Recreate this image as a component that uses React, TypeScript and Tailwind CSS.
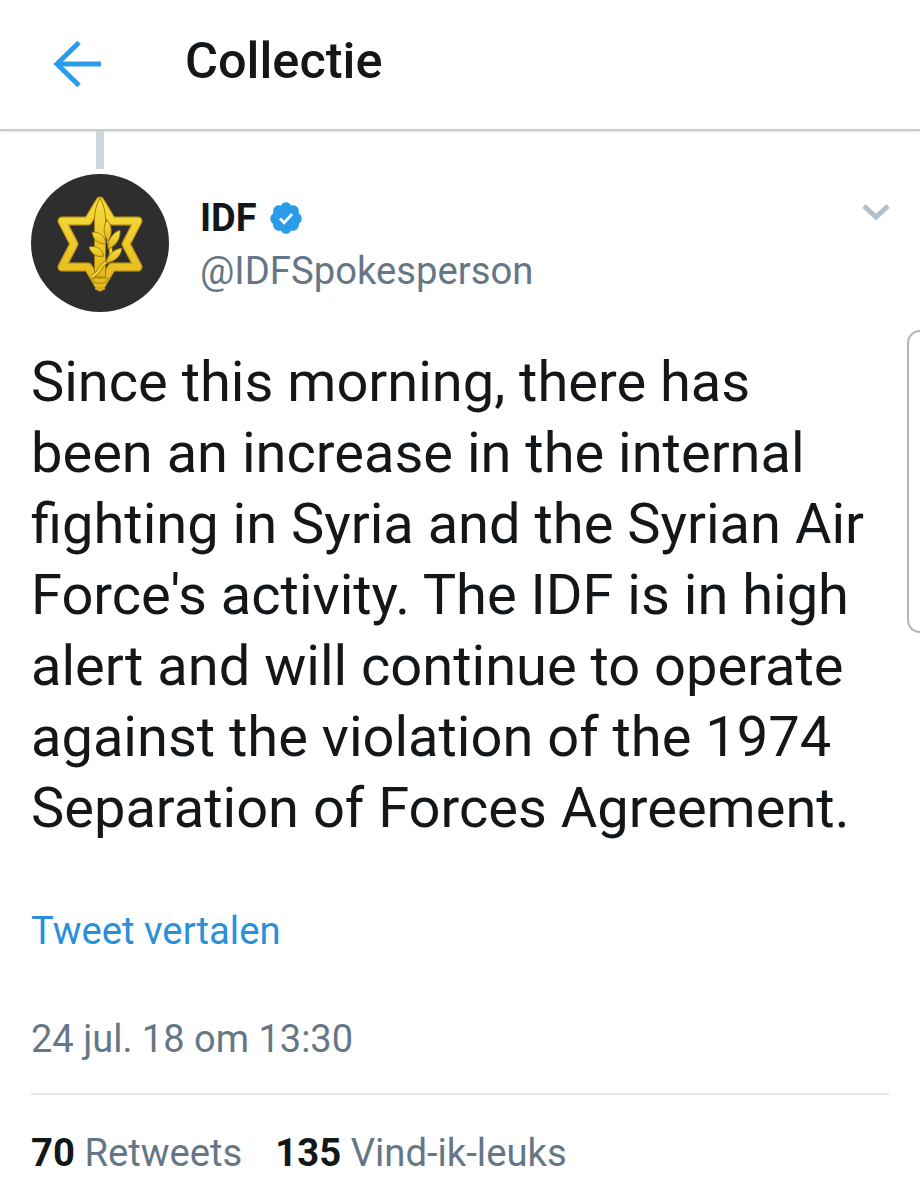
const tweetLines = [
  'Since this morning, there has',
  'been an increase in the internal',
  'fighting in Syria and the Syrian Air',
  "Force's activity. The IDF is in high",
  'alert and will continue to operate',
  'against the violation of the 1974',
  'Separation of Forces Agreement.',
]

function BackArrow() {
  return (
    <svg width="48" height="48" viewBox="0 0 48 48" fill="none" stroke="#2b9ce8" strokeWidth="5">
      <path d="M48 24H4" />
      <path d="M26 2.500L4 24L26 45.500" />
    </svg>
  )
}

function VerifiedBadge() {
  return (
    <svg width="36" height="36" viewBox="0 0 24 24">
      <path
        fill="#2b9ce8"
        d="M22.500 12.500c0-1.580-.875-2.950-2.148-3.600.154-.435.238-.905.238-1.400 0-2.210-1.710-3.998-3.818-3.998-.47 0-.92.084-1.336.25C14.818 2.415 13.510 1.500 12 1.500s-2.816.917-3.437 2.250c-.415-.165-.866-.25-1.336-.25-2.110 0-3.818 1.790-3.818 4 0 .494.083.964.237 1.400-1.272.65-2.147 2.018-2.147 3.600 0 1.495.782 2.798 1.942 3.486-.02.17-.032.34-.032.514 0 2.210 1.708 4 3.818 4 .47 0 .92-.086 1.335-.25.620 1.334 1.926 2.250 3.437 2.250 1.512 0 2.818-.916 3.437-2.250.415.163.865.248 1.336.248 2.110 0 3.818-1.790 3.818-4 0-.174-.012-.344-.033-.513 1.158-.687 1.943-1.990 1.943-3.484z"
      />
      <path d="M8 12.400l2.800 2.800 5.200-5.800" fill="none" stroke="#fff" strokeWidth="1.900" />
    </svg>
  )
}

function IdfLogo() {
  return (
    <svg width="138" height="138" viewBox="0 0 138 138">
      <defs>
        <linearGradient id="gold" x1="0" y1="0" x2="0" y2="1">
          <stop offset="0" stopColor="#f8dd3e" />
          <stop offset="1" stopColor="#e3b618" />
        </linearGradient>
      </defs>
      <circle cx="69" cy="69" r="69" fill="#2e2e2f" />
      {/* star */}
      <path
        d="M69 27L81 47H107L95 70L107 93H81L69 113L57 93H31L43 70L31 47H57Z"
        fill="none"
        stroke="#c79c10"
        strokeWidth="9"
        strokeLinejoin="round"
      />
      <path
        d="M69 27L81 47H107L95 70L107 93H81L69 113L57 93H31L43 70L31 47H57Z"
        fill="none"
        stroke="url(#gold)"
        strokeWidth="6.500"
        strokeLinejoin="round"
      />
      {/* sword */}
      <path d="M69 24C73 31 74.500 38 74.500 46V103H63.500V46C63.500 38 65 31 69 24Z" fill="url(#gold)" stroke="#a07c0a" strokeWidth="1" />
      <path d="M61 104H77L74 109H64Z" fill="#e5bb1e" stroke="#a07c0a" strokeWidth="0.800" />
      <rect x="63" y="110" width="12" height="2.500" rx="1" fill="#e5bb1e" />
      <rect x="64" y="113.500" width="10" height="2.500" rx="1" fill="#d4a91a" />
      {/* olive branch */}
      <path d="M60 103C72 98 66 92 76 88C82 82 80 74 77 66" fill="none" stroke="#a07c0a" strokeWidth="4" />
      <path d="M60 103C72 98 66 92 76 88C82 82 80 74 77 66" fill="none" stroke="#f4d53a" strokeWidth="2.400" />
      <g fill="url(#gold)" stroke="#8f6e08" strokeWidth="0.800">
        <path d="M76 46C81 51 82 60 77 67C72 61 72 52 76 46Z" />
        <path d="M89 56C90 65 85 72 77 75C76 67 81 59 89 56Z" />
        <path d="M61 58C69 58 74 62 75 70C67 70 62 66 61 58Z" />
        <path d="M91 74C90 82 84 88 75 89C76 81 83 75 91 74Z" />
        <path d="M58 73C65 71 71 75 73 82C66 84 60 80 58 73Z" />
      </g>
    </svg>
  )
}

export default function App() {
  return (
    <div className="relative h-[1200px] w-[920px] overflow-hidden bg-white font-['Roboto',sans-serif] text-[#14171a]">
      <header className="flex h-[131px] items-start border-b-2 border-[#c9cccf] bg-white pt-[40px] pl-[53px] shadow-[0_1px_3px_rgba(0,0,0,0.12)]">
        <BackArrow />
        <h1 className="ml-[84px] -mt-[4px] text-[50.500px] leading-[50px] font-medium">Collectie</h1>
      </header>

      <main className="flex flex-col px-[31px]">
        <div className="ml-[65px] h-[38px] w-2 bg-[#ccd6dd]" />

        <div className="mt-[5px] flex items-start">
          <IdfLogo />
          <div className="ml-[31px] flex flex-1 flex-col pt-[24px]">
            <div className="flex items-center gap-[11px]">
              <span className="text-[38px] leading-[40px] font-bold">IDF</span>
              <VerifiedBadge />
            </div>
            <span className="mt-[12px] text-[38.250px] leading-[42px] text-[#657786]">@IDFSpokesperson</span>
          </div>
          <svg width="28" height="18" viewBox="0 0 28 18" fill="none" stroke="#b1bfc8" strokeWidth="5" className="mt-[29px] mr-[-1px]">
            <path d="M2 3l12 11L26 3" />
          </svg>
        </div>

        <div className="mt-[35px] text-[56px] leading-[71px] whitespace-nowrap">
          {tweetLines.map((line) => (
            <p key={line}>{line}</p>
          ))}
        </div>

        <a className="mt-[65px] text-[38.250px] leading-[44px] text-[#2a90d9]">Tweet vertalen</a>
        <p className="mt-[64px] text-[38px] leading-[44px] text-[#657786]">24 jul. 18 om 13:30</p>

        <hr className="mt-[32px] h-0.5 border-0 bg-[#e1e8ed]" />

        <div className="mt-[36px] flex gap-[33px] text-[38.250px] leading-[44px] text-[#657786]">
          <span>
            <b className="font-bold text-[#14171a]">70</b> Retweets
          </span>
          <span>
            <b className="font-bold text-[#14171a]">135</b> Vind-ik-leuks
          </span>
        </div>
      </main>

      {/* edge handle sliding in from the right */}
      <div className="absolute top-[330px] right-0 h-[303px] w-[13px] rounded-l-[14px] border-y-2 border-l-2 border-[#b4b4b4] bg-white" />
    </div>
  )
}
